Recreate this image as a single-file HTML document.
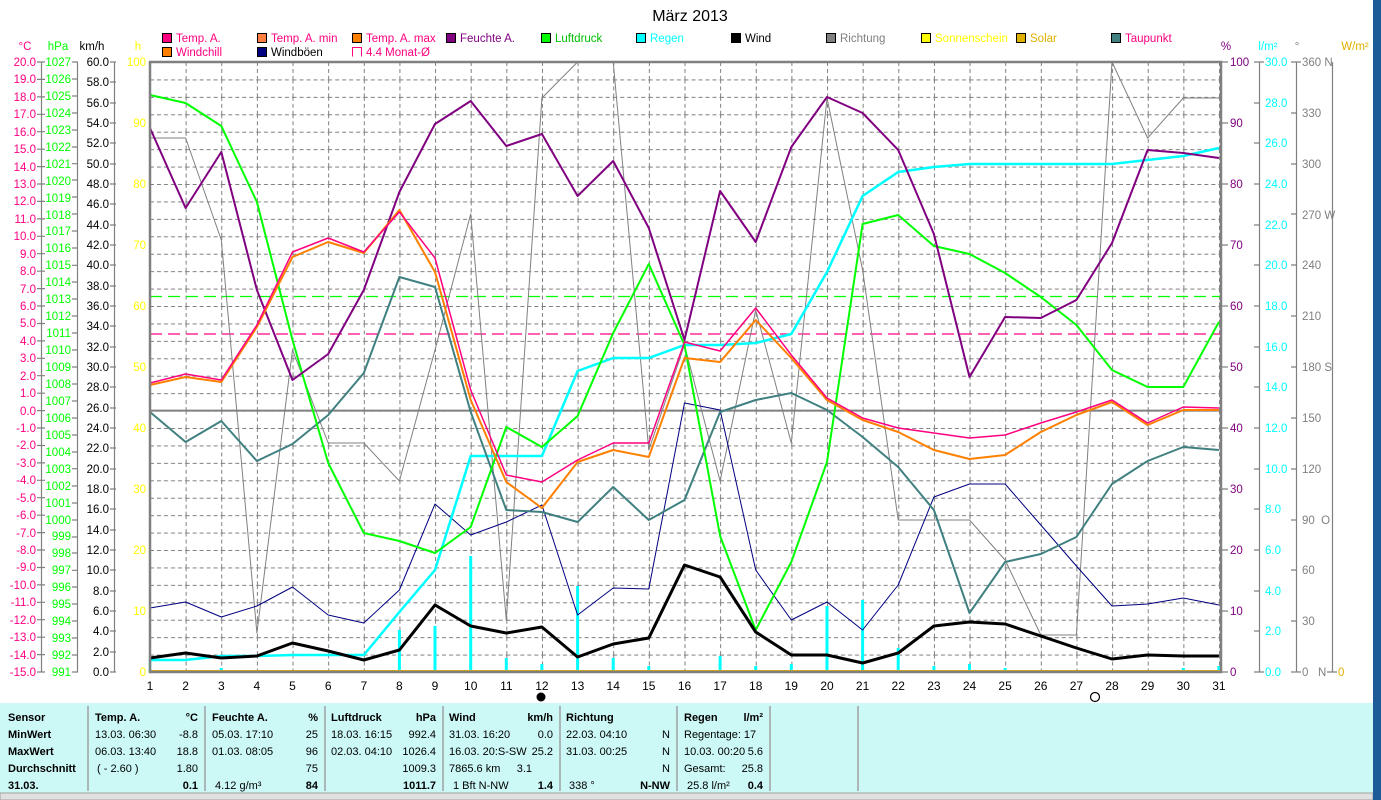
<!DOCTYPE html>
<html><head><meta charset="utf-8"><style>
html,body{margin:0;padding:0;background:#fff;width:1381px;height:800px;overflow:hidden;font-family:"Liberation Sans",sans-serif}
svg{position:absolute;left:0;top:0}
</style></head><body>
<svg width="1381" height="800" viewBox="0 0 1381 800" font-family="Liberation Sans, sans-serif" font-size="11.5">
<defs>
<pattern id="g" x="150" y="62" width="35.633" height="17.429" patternUnits="userSpaceOnUse">
<line x1="0" y1="0.5" x2="35.633" y2="0.5" stroke="#808080" stroke-dasharray="4,3"/>
<line x1="0.5" y1="0" x2="0.5" y2="17.429" stroke="#808080" stroke-dasharray="4,3"/>
</pattern>
</defs>
<rect width="1381" height="800" fill="#fff"/>
<text x="690" y="21" font-size="16" text-anchor="middle">März 2013</text>

<!-- legend -->
<g font-size="11.5">
<rect x="162.5" y="33.5" width="9" height="9" fill="#ff0080" stroke="#000"/><text x="176" y="42" fill="#ff0080">Temp. A.</text>
<rect x="257.5" y="33.5" width="9" height="9" fill="#ff8040" stroke="#000"/><text x="271" y="42" fill="#ff0080">Temp. A. min</text>
<rect x="352.5" y="33.5" width="9" height="9" fill="#ff8000" stroke="#000"/><text x="366" y="42" fill="#ff0080">Temp. A. max</text>
<rect x="446.5" y="33.5" width="9" height="9" fill="#800080" stroke="#000"/><text x="460" y="42" fill="#800080">Feuchte A.</text>
<rect x="541.5" y="33.5" width="9" height="9" fill="#00ff00" stroke="#000"/><text x="555" y="42" fill="#00c000">Luftdruck</text>
<rect x="636.5" y="33.5" width="9" height="9" fill="#00ffff" stroke="#000"/><text x="650" y="42" fill="#00ffff">Regen</text>
<rect x="731.5" y="33.5" width="9" height="9" fill="#000" stroke="#000"/><text x="745" y="42" fill="#000">Wind</text>
<rect x="826.5" y="33.5" width="9" height="9" fill="#808080" stroke="#000"/><text x="840" y="42" fill="#808080">Richtung</text>
<rect x="921.5" y="33.5" width="9" height="9" fill="#ffff00" stroke="#000"/><text x="935" y="42" fill="#ffff00">Sonnenschein</text>
<rect x="1016.5" y="33.5" width="9" height="9" fill="#e0b000" stroke="#000"/><text x="1030" y="42" fill="#e0b000">Solar</text>
<rect x="1111.5" y="33.5" width="9" height="9" fill="#408080" stroke="#000"/><text x="1125" y="42" fill="#ff0080">Taupunkt</text>
<rect x="162.5" y="47.5" width="9" height="9" fill="#ff8000" stroke="#000"/><text x="176" y="56" fill="#ff0080">Windchill</text>
<rect x="257.5" y="47.5" width="9" height="9" fill="#000080" stroke="#000"/><text x="271" y="56" fill="#000">Windböen</text>
<path d="M352.5 56.5V47.5h9v9" fill="none" stroke="#ff0080"/><text x="366" y="56" fill="#ff0080">4.4 Monat-Ø</text>
</g>

<!-- axis headers -->
<text x="25" y="50" fill="#ff0080" text-anchor="middle">°C</text>
<text x="58" y="50" fill="#00ff00" text-anchor="middle">hPa</text>
<text x="92" y="50" fill="#000" text-anchor="middle">km/h</text>
<text x="138" y="50" fill="#ffff00" text-anchor="middle">h</text>
<text x="1226" y="50" fill="#800080" text-anchor="middle">%</text>
<text x="1268" y="50" fill="#00ffff" text-anchor="middle">l/m²</text>
<text x="1297" y="50" fill="#808080" text-anchor="middle">°</text>
<text x="1355" y="50" fill="#e0b000" text-anchor="middle">W/m²</text>

<!-- axis lines -->
<g stroke="#808080" stroke-width="1.2" fill="none">
<line x1="41.5" y1="62" x2="41.5" y2="672"/>
<line x1="77.5" y1="62" x2="77.5" y2="672"/>
<line x1="114.5" y1="62" x2="114.5" y2="672"/>
<line x1="1259.5" y1="62" x2="1259.5" y2="672"/>
<line x1="1296.5" y1="62" x2="1296.5" y2="672"/>
<line x1="1332.5" y1="62" x2="1332.5" y2="672"/>
<path d="M37 62h8M37 79.4h8M37 96.9h8M37 114.3h8M37 131.7h8M37 149.2h8M37 166.6h8M37 184h8M37 201.4h8M37 218.9h8M37 236.3h8M37 253.7h8M37 271.2h8M37 288.6h8M37 306h8M37 323.5h8M37 340.9h8M37 358.3h8M37 375.7h8M37 393.2h8M37 410.6h8M37 428h8M37 445.5h8M37 462.9h8M37 480.3h8M37 497.7h8M37 515.2h8M37 532.6h8M37 550h8M37 567.5h8M37 584.9h8M37 602.3h8M37 619.7h8M37 637.2h8M37 654.6h8M37 672h8"/>
<path d="M72 62h6M72 163.7h6M72 265.3h6M72 367h6M72 468.7h6M72 570.3h6M72 672h6M72 79h6M72 96h6M72 113h6M72 130h6M72 147h6M72 180h6M72 197h6M72 214h6M72 231h6M72 248h6M72 282h6M72 299h6M72 316h6M72 333h6M72 350h6M72 384h6M72 401h6M72 418h6M72 435h6M72 452h6M72 486h6M72 503h6M72 520h6M72 537h6M72 553h6M72 587h6M72 604h6M72 621h6M72 638h6M72 655h6"/>
<path d="M110 62h6M110 82h6M110 103h6M110 123h6M110 143h6M110 164h6M110 184h6M110 204h6M110 225h6M110 245h6M110 265h6M110 286h6M110 306h6M110 326h6M110 347h6M110 367h6M110 387h6M110 408h6M110 428h6M110 448h6M110 469h6M110 489h6M110 509h6M110 530h6M110 550h6M110 570h6M110 591h6M110 611h6M110 631h6M110 652h6M110 672h6"/>
<path d="M1254 62h10M1254 103h6M1254 143h6M1254 184h6M1254 225h6M1254 265h6M1254 306h6M1254 347h6M1254 387h6M1254 428h6M1254 469h6M1254 509h6M1254 550h6M1254 591h6M1254 631h6M1254 672h10"/>
<path d="M1291 62h10M1291 113h6M1291 164h6M1291 214h6M1291 265h6M1291 316h6M1291 367h6M1291 418h6M1291 469h6M1291 520h6M1291 570h6M1291 621h6M1291 672h10"/>
<path d="M1222 62h6M1222 123h6M1222 184h6M1222 245h6M1222 306h6M1222 367h6M1222 428h6M1222 489h6M1222 550h6M1222 611h6M1222 672h6M1327 672h10"/>
</g>

<!-- left labels °C -->
<g fill="#ff0080" text-anchor="end">
<text x="36" y="66">20.0</text><text x="36" y="83">19.0</text><text x="36" y="101">18.0</text><text x="36" y="118">17.0</text><text x="36" y="136">16.0</text><text x="36" y="153">15.0</text><text x="36" y="171">14.0</text><text x="36" y="188">13.0</text><text x="36" y="205">12.0</text><text x="36" y="223">11.0</text><text x="36" y="240">10.0</text><text x="36" y="258">9.0</text><text x="36" y="275">8.0</text><text x="36" y="293">7.0</text><text x="36" y="310">6.0</text><text x="36" y="327">5.0</text><text x="36" y="345">4.0</text><text x="36" y="362">3.0</text><text x="36" y="380">2.0</text><text x="36" y="397">1.0</text><text x="36" y="415">0.0</text><text x="36" y="432">-1.0</text><text x="36" y="449">-2.0</text><text x="36" y="467">-3.0</text><text x="36" y="484">-4.0</text><text x="36" y="502">-5.0</text><text x="36" y="519">-6.0</text><text x="36" y="537">-7.0</text><text x="36" y="554">-8.0</text><text x="36" y="571">-9.0</text><text x="36" y="589">-10.0</text><text x="36" y="606">-11.0</text><text x="36" y="624">-12.0</text><text x="36" y="641">-13.0</text><text x="36" y="659">-14.0</text><text x="36" y="676">-15.0</text>
</g>
<g fill="#00ff00" text-anchor="end">
<text x="71" y="66">1027</text><text x="71" y="83">1026</text><text x="71" y="100">1025</text><text x="71" y="117">1024</text><text x="71" y="134">1023</text><text x="71" y="151">1022</text><text x="71" y="168">1021</text><text x="71" y="185">1020</text><text x="71" y="202">1019</text><text x="71" y="219">1018</text><text x="71" y="235">1017</text><text x="71" y="252">1016</text><text x="71" y="269">1015</text><text x="71" y="286">1014</text><text x="71" y="303">1013</text><text x="71" y="320">1012</text><text x="71" y="337">1011</text><text x="71" y="354">1010</text><text x="71" y="371">1009</text><text x="71" y="388">1008</text><text x="71" y="405">1007</text><text x="71" y="422">1006</text><text x="71" y="439">1005</text><text x="71" y="456">1004</text><text x="71" y="473">1003</text><text x="71" y="490">1002</text><text x="71" y="507">1001</text><text x="71" y="524">1000</text><text x="71" y="540">999</text><text x="71" y="557">998</text><text x="71" y="574">997</text><text x="71" y="591">996</text><text x="71" y="608">995</text><text x="71" y="625">994</text><text x="71" y="642">993</text><text x="71" y="659">992</text><text x="71" y="676">991</text>
</g>
<g fill="#000" text-anchor="end">
<text x="109" y="66">60.0</text><text x="109" y="86">58.0</text><text x="109" y="107">56.0</text><text x="109" y="127">54.0</text><text x="109" y="147">52.0</text><text x="109" y="168">50.0</text><text x="109" y="188">48.0</text><text x="109" y="208">46.0</text><text x="109" y="229">44.0</text><text x="109" y="249">42.0</text><text x="109" y="269">40.0</text><text x="109" y="290">38.0</text><text x="109" y="310">36.0</text><text x="109" y="330">34.0</text><text x="109" y="351">32.0</text><text x="109" y="371">30.0</text><text x="109" y="391">28.0</text><text x="109" y="412">26.0</text><text x="109" y="432">24.0</text><text x="109" y="452">22.0</text><text x="109" y="473">20.0</text><text x="109" y="493">18.0</text><text x="109" y="513">16.0</text><text x="109" y="534">14.0</text><text x="109" y="554">12.0</text><text x="109" y="574">10.0</text><text x="109" y="595">8.0</text><text x="109" y="615">6.0</text><text x="109" y="635">4.0</text><text x="109" y="656">2.0</text><text x="109" y="676">0.0</text>
</g>
<g fill="#ffff00" text-anchor="end">
<text x="146" y="66">100</text><text x="146" y="127">90</text><text x="146" y="188">80</text><text x="146" y="249">70</text><text x="146" y="310">60</text><text x="146" y="371">50</text><text x="146" y="432">40</text><text x="146" y="493">30</text><text x="146" y="554">20</text><text x="146" y="615">10</text><text x="146" y="676">0</text>
</g>
<g fill="#800080">
<text x="1230" y="66">100</text><text x="1230" y="127">90</text><text x="1230" y="188">80</text><text x="1230" y="249">70</text><text x="1230" y="310">60</text><text x="1230" y="371">50</text><text x="1230" y="432">40</text><text x="1230" y="493">30</text><text x="1230" y="554">20</text><text x="1230" y="615">10</text><text x="1230" y="676">0</text>
</g>
<g fill="#00ffff">
<text x="1265" y="66">30.0</text><text x="1265" y="107">28.0</text><text x="1265" y="147">26.0</text><text x="1265" y="188">24.0</text><text x="1265" y="229">22.0</text><text x="1265" y="269">20.0</text><text x="1265" y="310">18.0</text><text x="1265" y="351">16.0</text><text x="1265" y="391">14.0</text><text x="1265" y="432">12.0</text><text x="1265" y="473">10.0</text><text x="1265" y="513">8.0</text><text x="1265" y="554">6.0</text><text x="1265" y="595">4.0</text><text x="1265" y="635">2.0</text><text x="1265" y="676">0.0</text>
</g>
<g fill="#808080">
<text x="1302" y="66">360 N</text><text x="1302" y="117">330</text><text x="1302" y="168">300</text><text x="1302" y="219">270 W</text><text x="1302" y="269">240</text><text x="1302" y="320">210</text><text x="1302" y="371">180 S</text><text x="1302" y="422">150</text><text x="1302" y="473">120</text><text x="1302" y="524">90&#160;&#160;O</text><text x="1302" y="574">60</text><text x="1302" y="625">30</text><text x="1302" y="676">0&#160;&#160;&#160;N</text>
</g>
<text x="1338" y="676" fill="#e0b000">0</text>

<!-- plot -->
<rect x="150" y="62" width="1071" height="610" fill="url(#g)"/>
<line x1="150" y1="410.6" x2="1221" y2="410.6" stroke="#808080" stroke-width="2"/>
<line x1="150" y1="296.5" x2="1221" y2="296.5" stroke="#00ff00" stroke-width="1.2" stroke-dasharray="12,6"/>
<line x1="150" y1="334" x2="1221" y2="334" stroke="#ff0080" stroke-width="1.2" stroke-dasharray="12,6"/>

<!-- rain bars -->
<g stroke="#00ffff" stroke-width="3">
<path d="M221.3 672v-4M399.4 672v-42M435 672v-46M470.7 672v-116M506.3 672v-14M541.9 672v-8M577.6 672v-86M613.2 672v-14M648.8 672v-6M720.1 672v-16M755.7 672v-6M791.3 672v-8M827 672v-66M862.6 672v-72M898.2 672v-24M933.9 672v-6M969.5 672v-8M1005.1 672v-4M1183.3 672v-4M1218.9 672v-6"/>
</g>
<line x1="150" y1="671" x2="1221" y2="671" stroke="#e0b000" stroke-width="2"/>

<g fill="none" stroke-linejoin="round">
<!-- Richtung -->
<polyline stroke="#808080" stroke-width="1" points="150,138 185.6,138 221.3,240 256.9,633 292.5,350 328.2,443 363.8,443 399.4,481 435,350 470.7,214 506.3,620 541.9,98 577.6,62 613.2,62 648.8,450 684.5,345 720.1,481 755.7,310 791.3,443 827,98 862.6,270 898.2,520 933.9,520 969.5,520 1005.1,560 1040.8,635 1076.4,635 1112,62 1147.6,138 1183.3,98 1218.9,98"/>
<!-- Windböen -->
<polyline stroke="#000080" stroke-width="1" points="150,608 185.6,602 221.3,617 256.9,606 292.5,587 328.2,615 363.8,623 399.4,590 435,504 470.7,535 506.3,522 541.9,505 577.6,615 613.2,588 648.8,589 684.5,403 720.1,410 755.7,570 791.3,620 827,602 862.6,630 898.2,585 933.9,497 969.5,484 1005.1,484 1040.8,525 1076.4,566 1112,606 1147.6,604 1183.3,598 1218.9,605"/>
<!-- Regen -->
<polyline stroke="#00ffff" stroke-width="2.5" points="150,672 150,660 185.6,660 221.3,656 256.9,656 292.5,655 328.2,655 363.8,655 399.4,612 435,570 470.7,456 506.3,456 541.9,456 577.6,371 613.2,358 648.8,358 684.5,345 720.1,345 755.7,343 791.3,334 827,272 862.6,196 898.2,172 933.9,167 969.5,164 1005.1,164 1040.8,164 1076.4,164 1112,164 1147.6,160 1183.3,156 1218.9,148"/>
<!-- Taupunkt -->
<polyline stroke="#408080" stroke-width="2" points="150,412 185.6,442 221.3,421 256.9,461 292.5,444 328.2,415 363.8,373 399.4,277 435,287 470.7,412 506.3,510 541.9,512 577.6,522 613.2,487 648.8,520 684.5,500 720.1,412 755.7,400 791.3,393 827,410 862.6,437 898.2,467 933.9,510 969.5,613 1005.1,562 1040.8,554 1076.4,537 1112,484 1147.6,461 1183.3,447 1218.9,450"/>
<!-- Luftdruck -->
<polyline stroke="#00ff00" stroke-width="2" points="150,95 185.6,103 221.3,126 256.9,202 292.5,340 328.2,463 363.8,533 399.4,541 435,553 470.7,527 506.3,427 541.9,447 577.6,416 613.2,333 648.8,264 684.5,345 720.1,536 755.7,630 791.3,562 827,462 862.6,224 898.2,215 933.9,246 969.5,254 1005.1,273 1040.8,297 1076.4,325 1112,370 1147.6,387 1183.3,387 1218.9,322"/>
<!-- Feuchte -->
<polyline stroke="#800080" stroke-width="2" points="150,128 185.6,208 221.3,152 256.9,290 292.5,380 328.2,354 363.8,290 399.4,192 435,124 470.7,101 506.3,146 541.9,134 577.6,196 613.2,161 648.8,228 684.5,340 720.1,191 755.7,242 791.3,147 827,97 862.6,113 898.2,150 933.9,234 969.5,377 1005.1,317 1040.8,318 1076.4,300 1112,243 1147.6,150 1183.3,153 1218.9,158"/>
<!-- Windchill -->
<polyline stroke="#ff8000" stroke-width="2" points="150,385 185.6,377 221.3,382 256.9,327 292.5,257 328.2,242 363.8,253 399.4,210 435,272 470.7,400 506.3,482 541.9,508 577.6,462 613.2,450 648.8,457 684.5,358 720.1,362 755.7,320 791.3,358 827,400 862.6,420 898.2,432 933.9,450 969.5,459 1005.1,455 1040.8,432 1076.4,415 1112,402 1147.6,425 1183.3,410 1218.9,410"/>
<!-- Temp A -->
<polyline stroke="#ff0080" stroke-width="1.5" points="150,383 185.6,374 221.3,380 256.9,325 292.5,252 328.2,238 363.8,252 399.4,212 435,258 470.7,390 506.3,475 541.9,482 577.6,460 613.2,443 648.8,443 684.5,342 720.1,351 755.7,308 791.3,355 827,398 862.6,418 898.2,428 933.9,433 969.5,438 1005.1,435 1040.8,423 1076.4,412 1112,400 1147.6,423 1183.3,407 1218.9,408"/>
<!-- Wind -->
<polyline stroke="#000" stroke-width="3" points="150,658 185.6,653 221.3,658 256.9,656 292.5,643 328.2,651 363.8,660 399.4,650 435,605 470.7,626 506.3,633 541.9,627 577.6,657 613.2,644 648.8,638 684.5,565 720.1,577 755.7,632 791.3,655 827,655 862.6,663 898.2,653 933.9,626 969.5,622 1005.1,624 1040.8,636 1076.4,648 1112,659 1147.6,655 1183.3,656 1218.9,656"/>
</g>
<rect x="150" y="62" width="1071" height="610" fill="none" stroke="#808080" stroke-width="2.5"/>

<!-- x labels -->
<g text-anchor="middle" font-size="12">
<text x="150" y="690">1</text><text x="185.6" y="690">2</text><text x="221.3" y="690">3</text><text x="256.9" y="690">4</text><text x="292.5" y="690">5</text><text x="328.2" y="690">6</text><text x="363.8" y="690">7</text><text x="399.4" y="690">8</text><text x="435" y="690">9</text><text x="470.7" y="690">10</text><text x="506.3" y="690">11</text><text x="541.9" y="690">12</text><text x="577.6" y="690">13</text><text x="613.2" y="690">14</text><text x="648.8" y="690">15</text><text x="684.5" y="690">16</text><text x="720.1" y="690">17</text><text x="755.7" y="690">18</text><text x="791.3" y="690">19</text><text x="827" y="690">20</text><text x="862.6" y="690">21</text><text x="898.2" y="690">22</text><text x="933.9" y="690">23</text><text x="969.5" y="690">24</text><text x="1005.1" y="690">25</text><text x="1040.8" y="690">26</text><text x="1076.4" y="690">27</text><text x="1112" y="690">28</text><text x="1147.6" y="690">29</text><text x="1183.3" y="690">30</text><text x="1218.9" y="690">31</text>
</g>
<circle cx="541" cy="697" r="4.5" fill="#000"/>
<circle cx="1095" cy="697" r="4.5" fill="none" stroke="#000" stroke-width="1.2"/>

<!-- table -->
<rect x="0" y="703" width="1373" height="90" fill="#ccf8f6"/>
<g stroke="#a0a0a0" stroke-width="1.5">
<line x1="88" y1="706" x2="88" y2="791"/><line x1="205" y1="706" x2="205" y2="791"/><line x1="325" y1="706" x2="325" y2="791"/><line x1="443" y1="706" x2="443" y2="791"/><line x1="560" y1="706" x2="560" y2="791"/><line x1="677" y1="706" x2="677" y2="791"/><line x1="770" y1="706" x2="770" y2="791"/><line x1="858" y1="706" x2="858" y2="791"/>
</g>
<rect x="0" y="793" width="1373" height="7" fill="#e0e0e0" stroke="#a0a0a0"/>
<rect x="1373" y="0" width="8" height="800" fill="#1c5a98"/>
<g font-size="11">
<g font-weight="bold">
<text x="8" y="721">Sensor</text><text x="8" y="738">MinWert</text><text x="8" y="755">MaxWert</text><text x="8" y="772">Durchschnitt</text><text x="8" y="789">31.03.</text>
<text x="95" y="721">Temp. A.</text><text x="198" y="721" text-anchor="end">°C</text>
<text x="212" y="721">Feuchte A.</text><text x="318" y="721" text-anchor="end">%</text>
<text x="331" y="721">Luftdruck</text><text x="436" y="721" text-anchor="end">hPa</text>
<text x="449" y="721">Wind</text><text x="553" y="721" text-anchor="end">km/h</text>
<text x="566" y="721">Richtung</text>
<text x="684" y="721">Regen</text><text x="763" y="721" text-anchor="end">l/m²</text>
<text x="198" y="789" text-anchor="end">0.1</text><text x="318" y="789" text-anchor="end">84</text><text x="436" y="789" text-anchor="end">1011.7</text><text x="553" y="789" text-anchor="end">1.4</text><text x="670" y="789" text-anchor="end">N-NW</text><text x="763" y="789" text-anchor="end">0.4</text>
</g>
<text x="95" y="738">13.03.  06:30</text><text x="198" y="738" text-anchor="end">-8.8</text>
<text x="95" y="755">06.03.  13:40</text><text x="198" y="755" text-anchor="end">18.8</text>
<text x="97" y="772">( - 2.60 )</text><text x="198" y="772" text-anchor="end">1.80</text>
<text x="212" y="738">05.03.  17:10</text><text x="318" y="738" text-anchor="end">25</text>
<text x="212" y="755">01.03.  08:05</text><text x="318" y="755" text-anchor="end">96</text>
<text x="318" y="772" text-anchor="end">75</text>
<text x="215" y="789">4.12 g/m³</text>
<text x="331" y="738">18.03.  16:15</text><text x="436" y="738" text-anchor="end">992.4</text>
<text x="331" y="755">02.03.  04:10</text><text x="436" y="755" text-anchor="end">1026.4</text>
<text x="436" y="772" text-anchor="end">1009.3</text>
<text x="449" y="738">31.03.  16:20</text><text x="553" y="738" text-anchor="end">0.0</text>
<text x="449" y="755">16.03.  20:S-SW</text><text x="553" y="755" text-anchor="end">25.2</text>
<text x="449" y="772">7865.6 km</text><text x="532" y="772" text-anchor="end">3.1</text>
<text x="453" y="789">1 Bft N-NW</text>
<text x="566" y="738">22.03.  04:10</text><text x="670" y="738" text-anchor="end">N</text>
<text x="566" y="755">31.03.  00:25</text><text x="670" y="755" text-anchor="end">N</text>
<text x="670" y="772" text-anchor="end">N</text>
<text x="569" y="789">338 °</text>
<text x="684" y="738">Regentage: 17</text>
<text x="684" y="755">10.03.  00:20</text><text x="763" y="755" text-anchor="end">5.6</text>
<text x="684" y="772">Gesamt:</text><text x="763" y="772" text-anchor="end">25.8</text>
<text x="687" y="789">25.8 l/m²</text>
</g>
</svg>
</body></html>
